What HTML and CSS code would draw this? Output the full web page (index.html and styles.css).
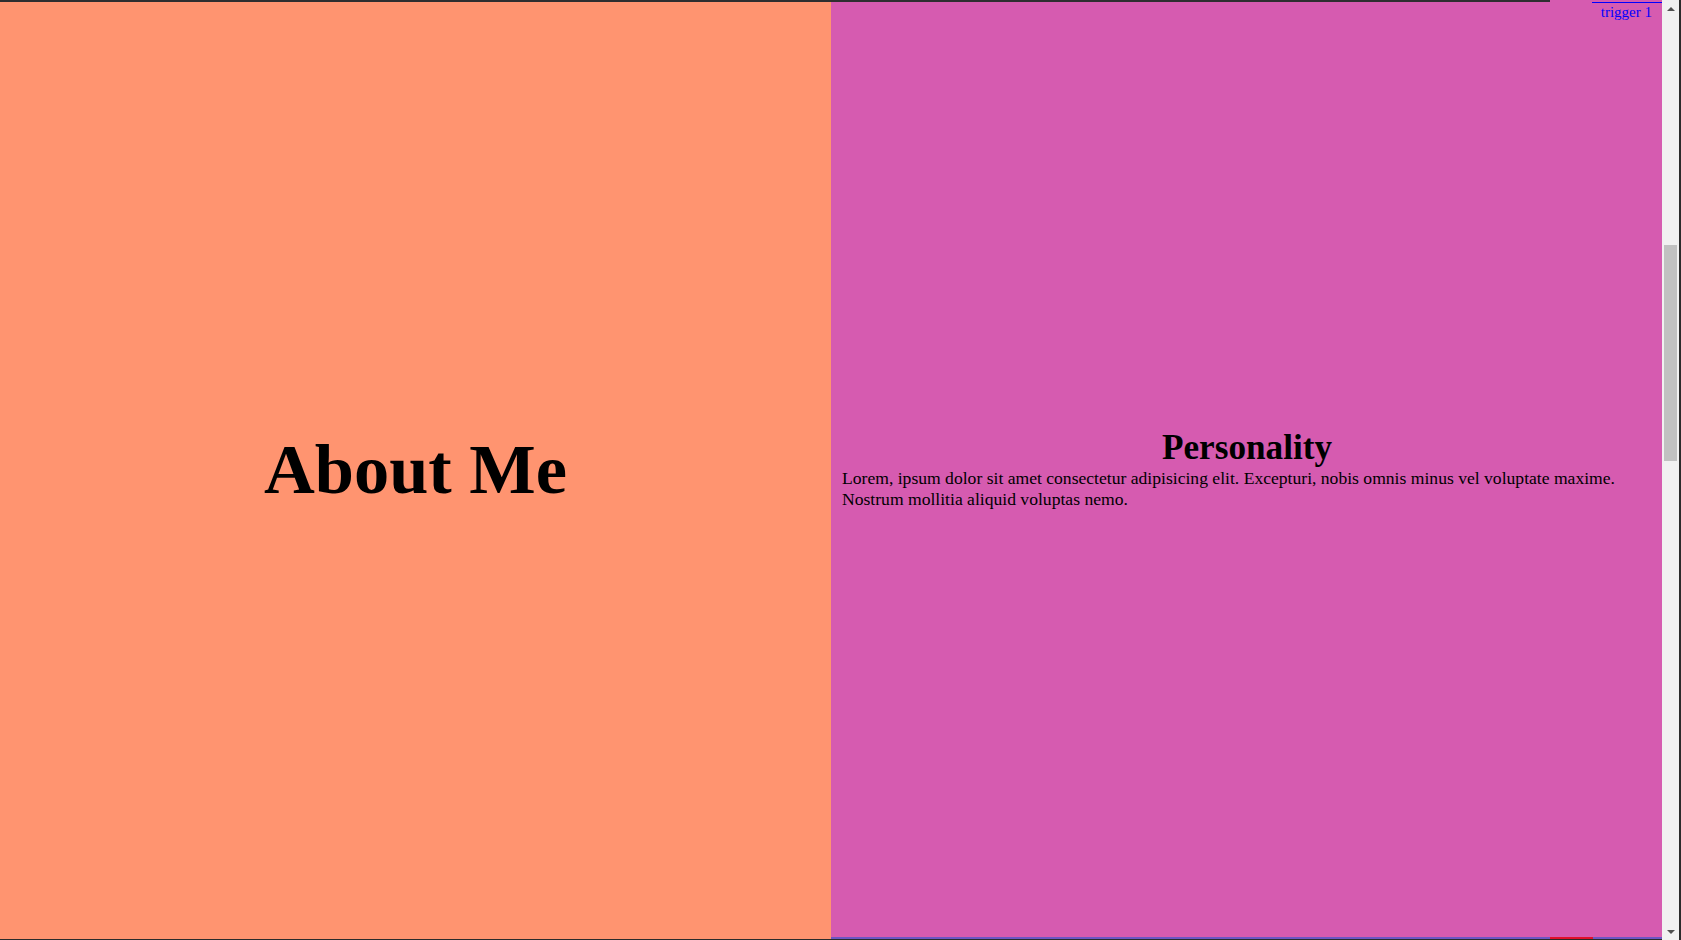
FILE: index.html
```html
<!DOCTYPE html>
<html lang="en">
<head>
<meta charset="utf-8">
<title>About Me</title>
<link rel="stylesheet" href="styles.css">
</head>
<body>
<div class="window">
  <div class="viewport">
    <section class="panel panel-about">
      <h1 class="about-title">About Me</h1>
    </section>
    <section class="panel panel-personality">
      <div class="personality-block">
        <h2 class="personality-title">Personality</h2>
        <p class="personality-text">Lorem, ipsum dolor sit amet consectetur adipisicing elit. Excepturi, nobis omnis minus vel voluptate maxime. Nostrum mollitia aliquid voluptas nemo.</p>
      </div>
    </section>
    <div class="top-edge"></div>
    <div class="indicator-trigger">trigger 1</div>
    <div class="indicator-start"></div>
  </div>
  <div class="scrollbar">
    <div class="scroll-btn"><span class="arrow-up"></span></div>
    <div class="scroll-track">
      <div class="scroll-thumb"></div>
    </div>
    <div class="scroll-btn"><span class="arrow-down"></span></div>
  </div>
</div>
</body>
</html>
```

FILE: styles.css
```css
html, body {
  margin: 0;
  padding: 0;
  overflow: hidden;
}

body {
  font-family: "Liberation Serif", "Times New Roman", serif;
  font-size: 17.6px;
  color: #000;
  background: #2b2b2b;
}

.window {
  display: flex;
  width: 1681px;
  height: 940px;
  background: #2b2b2b;
}

.viewport {
  position: relative;
  display: flex;
  flex: 0 0 1662px;
  width: 1662px;
  height: 939px;
}

.panel {
  flex: 0 0 50%;
  width: 50%;
  display: flex;
  align-items: center;
  justify-content: center;
  box-sizing: border-box;
}

.panel-about {
  background: #ff9470;
}

.panel-personality {
  background: #d65bb0;
  padding: 0 10px 0 11px;
  border-bottom: 2px solid #6c56c4;
}

.about-title {
  margin: 0;
  font-size: 70.4px;
  font-weight: bold;
}

.personality-block {
  width: 100%;
}

.personality-title {
  margin: 0;
  font-size: 35.2px;
  font-weight: bold;
  text-align: center;
}

.personality-text {
  margin: 0;
}

.top-edge {
  position: absolute;
  left: 0;
  top: 0;
  width: 1550px;
  height: 2px;
  background: #2e2e30;
}

.indicator-trigger {
  position: absolute;
  right: 0;
  top: 2px;
  border-top: 1px solid #0000ff;
  padding: 0 10px 3px 9px;
  white-space: nowrap;
  color: #0000ff;
  font-size: 15px;
  line-height: 19px;
}

.indicator-start {
  position: absolute;
  left: 1550px;
  bottom: 0;
  width: 43px;
  height: 2px;
  background: #e0102a;
}

.scrollbar {
  display: flex;
  flex-direction: column;
  flex: 0 0 17px;
  width: 17px;
  height: 940px;
  background: #f1f1f1;
}

.scroll-btn {
  display: flex;
  align-items: center;
  justify-content: center;
  height: 17px;
  flex: 0 0 17px;
}

.arrow-up {
  width: 0;
  height: 0;
  border-left: 4px solid transparent;
  border-right: 4px solid transparent;
  border-bottom: 4px solid #505050;
}

.arrow-down {
  width: 0;
  height: 0;
  border-left: 4px solid transparent;
  border-right: 4px solid transparent;
  border-top: 4px solid #505050;
}

.scroll-track {
  flex: 1 1 auto;
  padding: 228px 2px 0 2px;
}

.scroll-thumb {
  height: 216px;
  background: #c1c1c1;
}
```
